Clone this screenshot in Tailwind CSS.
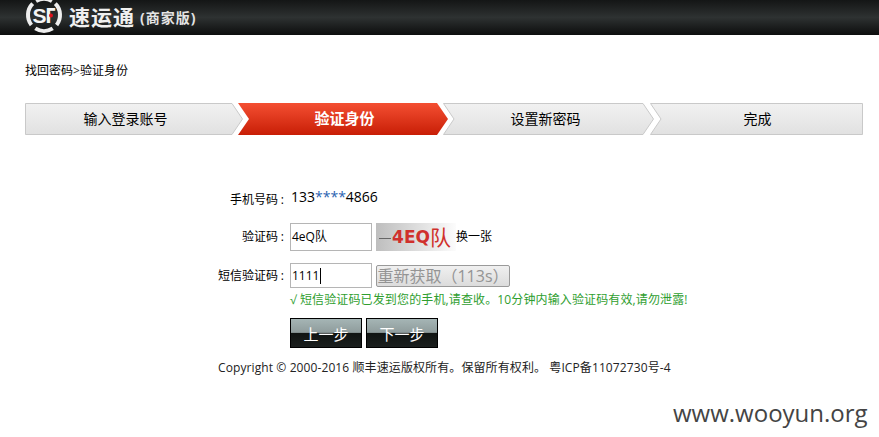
<!DOCTYPE html>
<html lang="zh-CN">
<head>
    <meta charset="UTF-8">
    <meta name="viewport" content="width=device-width, initial-scale=1.0">
    <script src="https://cdn.jsdelivr.net/npm/@tailwindcss/browser@4"></script>
    <title>找回密码</title>
</head>
<body class="w-[879px] h-[437px] overflow-hidden bg-white text-black text-xs font-['Open_Sans','Noto_Sans_CJK_SC',sans-serif]">
    <header class="h-[35px] pl-[25px] flex items-center bg-gradient-to-b from-[#141616] via-[#2e3232] to-[#0d0e0e] overflow-hidden">
        <svg class="w-[38px] h-[35px] shrink-0" viewBox="0 0 38 35">
            <g fill="none" stroke="#eeeeee" stroke-width="4">
                <path d="M7.700 3.700 A16 16 0 0 0 6.400 24.900"/>
                <path d="M30.300 3.700 A16 16 0 0 1 31.600 24.900"/>
                <path d="M10.300 28.400 A16 16 0 0 0 27.700 28.400"/>
                <path d="M11 1.100 A16 16 0 0 1 27 1.100"/>
            </g>
            <text x="7.500" y="22.500" fill="#f4f4f4" font-size="21" font-weight="700" font-family="Liberation Sans">S</text>
            <text x="20" y="22.500" fill="#f4f4f4" font-size="21" font-weight="700" font-family="Noto Sans">Γ</text>
            <circle cx="26" cy="15.500" r="2" fill="#e0101c"/>
        </svg>
        <span class="ml-[6px] text-[21px] leading-none font-bold text-[#f0f0f0] tracking-[1px]">速运通</span>
        <span class="ml-[5px] text-[14px] leading-none font-bold text-[#e4e4e4] tracking-[1px]">(商家版)</span>
    </header>

    <p class="mt-[28px] ml-[25px] leading-[16px]">找回密码<span class="text-[#333]">&gt;</span>验证身份</p>

    <ol class="mt-[24px] ml-[25px] flex h-[32px] text-sm">
        <li class="relative w-[218px] flex items-center justify-center pr-[17px]">
            <svg class="absolute inset-0 w-full h-full" viewBox="0 0 218 32">
                <defs><linearGradient id="g" x1="0" y1="0" x2="0" y2="1"><stop offset="0" stop-color="#f1f1f1"/><stop offset="1" stop-color="#e1e1e1"/></linearGradient>
                <linearGradient id="r" x1="0" y1="0" x2="0" y2="1"><stop offset="0" stop-color="#f44f32"/><stop offset="1" stop-color="#c81e06"/></linearGradient></defs>
                <path d="M.5 .5H207L217.500 16 207 31.500H.5Z" fill="url(#g)" stroke="#c9c9c9"/>
            </svg>
            <span class="relative">输入登录账号</span>
        </li>
        <li class="relative w-[210px] -ml-[5px] pl-[3px] flex items-center justify-center text-[15px] text-white font-bold">
            <svg class="absolute inset-0 w-full h-full" viewBox="0 0 210 32">
                <path d="M0 0H199L210 16 199 32H0L11 16Z" fill="url(#r)"/>
            </svg>
            <span class="relative">验证身份</span>
        </li>
        <li class="relative w-[211px] -ml-[5px] flex items-center justify-center pr-[6px]">
            <svg class="absolute inset-0 w-full h-full" viewBox="0 0 211 32">
                <path d="M.5 .5H200L210.500 16 200 31.500H.5L11 16Z" fill="url(#g)" stroke="#c9c9c9"/>
            </svg>
            <span class="relative">设置新密码</span>
        </li>
        <li class="relative w-[213px] -ml-[4px] flex items-center justify-center pl-[2px]">
            <svg class="absolute inset-0 w-full h-full" viewBox="0 0 213 32">
                <path d="M.5 .5H212.500V31.500H.5L11 16Z" fill="url(#g)" stroke="#c9c9c9"/>
            </svg>
            <span class="relative">完成</span>
        </li>
    </ol>

    <form class="mt-[52px] flex flex-col">
        <div class="flex items-center h-[20px]">
            <label class="w-[284px] text-right pt-[6px]">手机号码<span class="inline-block w-[6px]">:</span></label>
            <span class="ml-[7px] text-sm">133<span class="text-[#2a62b0]">****</span>4866</span>
        </div>
        <div class="flex items-center mt-[16px] h-[28px]">
            <label class="w-[284px] text-right">验证码<span class="inline-block w-[6px]">:</span></label>
            <div class="ml-[6px] w-[82px] h-[28px] border border-[#b5b5b5] pl-[1px] flex items-center">4eQ队</div>
            <div class="relative ml-[4px] w-[80px] h-[28px] bg-gradient-to-r from-[#bebebe] to-[#fcfcfc] flex items-center justify-end pr-[5px] text-[#d0302c] leading-none whitespace-nowrap">
                <span class="absolute left-[3px] top-[15px] w-[12px] h-px bg-[#666]"></span>
                <span class="relative text-[17px] font-bold font-['DejaVu_Sans',sans-serif]">4EQ</span><span class="relative text-[21px]">队</span>
            </div>
            <span>换一张</span>
        </div>
        <div class="flex items-center mt-[12px] h-[25px]">
            <label class="w-[284px] text-right">短信验证码<span class="inline-block w-[6px]">:</span></label>
            <div class="ml-[6px] w-[82px] h-[25px] border border-[#b5b5b5] pl-[1px] flex items-center"><span class="border-r border-black pr-[1px]">1111</span></div>
            <button type="button" class="ml-[4px] w-[134px] h-[22px] rounded-[2px] border border-[#9a9a9a] bg-gradient-to-b from-[#f0f0f0] to-[#dcdcdc] text-[#949494] text-base leading-none whitespace-nowrap [text-spacing-trim:space-all]">重新获取（113s）</button>
        </div>
        <p class="ml-[290px] mt-[3px] leading-[18px] text-[#2f9e2f] tracking-[0.13px] whitespace-nowrap">√ 短信验证码已发到您的手机,请查收。10分钟内输入验证码有效,请勿泄露!</p>
        <div class="ml-[290px] mt-[9px] flex gap-[4px]">
            <button type="button" class="w-[72px] h-[30px] pt-[2px] border border-black text-[15px] text-white bg-[linear-gradient(#a5b5b5_0,#8f9c9c_48%,#101412_50%,#1b1f1e_100%)]">上一步</button>
            <button type="button" class="w-[72px] h-[30px] pt-[2px] border border-black text-[15px] text-white bg-[linear-gradient(#a5b5b5_0,#8f9c9c_48%,#101412_50%,#1b1f1e_100%)]">下一步</button>
        </div>
    </form>

    <p class="mt-[12px] ml-[218px] leading-[16px] text-[#222] tracking-[0.1px] whitespace-nowrap">Copyright © 2000-2016 顺丰速运版权所有。保留所有权利。 粤ICP备11072730号-4</p>

    <p class="mt-[21px] ml-[673px] text-2xl leading-[32px] text-[#444] font-['Open_Sans',sans-serif] whitespace-nowrap">www.wooyun.org</p>
</body>
</html>
